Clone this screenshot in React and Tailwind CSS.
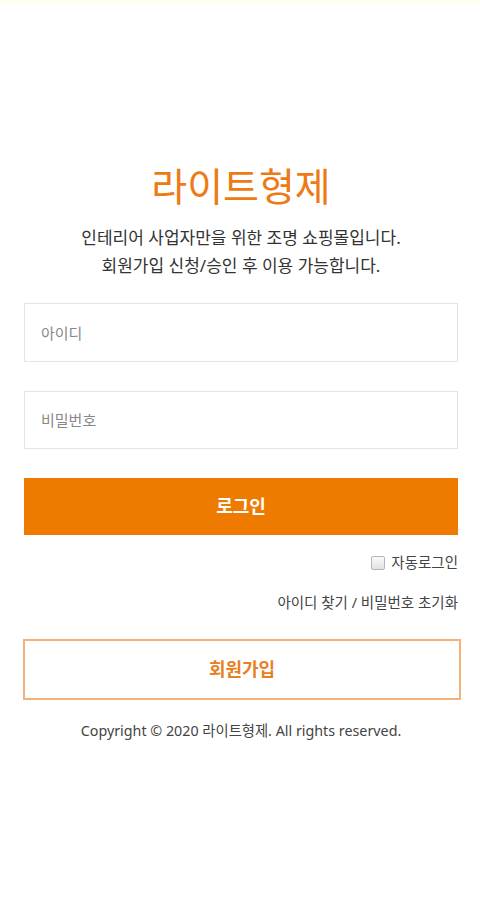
export default function App() {
  return (
    <div
      className="min-h-[900px] w-[480px] bg-white flex flex-col"
      style={{ fontFamily: '"Noto Sans", "Noto Sans CJK KR", sans-serif' }}
    >
      {/* top strip */}
      <div className="h-[4px] bg-[#fffff2]" />

      <div className="pl-6 pr-[22px] pt-[154px]">
        {/* TITLE */}
        <h1 className="text-center text-[39px] leading-[56px] text-[#ee7a16]">
          라이트형제
        </h1>
        <div className="mt-[10px] text-center text-[17px] leading-[28px] text-[#333]">
          <p>인테리어 사업자만을 위한 조명 쇼핑몰입니다.</p>
          <p>회원가입 신청/승인 후 이용 가능합니다.</p>
        </div>

        {/* INPUTS */}
        <div className="mt-[23px] flex flex-col gap-[29px]">
          <input
            placeholder="아이디"
            className="h-[59px] w-full border border-[#e4e4e4] px-4 text-[15px] text-[#333] placeholder:text-[#888] outline-none"
          />
          <input
            type="password"
            placeholder="비밀번호"
            className="h-[58px] w-full border border-[#e4e4e4] px-4 text-[15px] text-[#333] placeholder:text-[#888] outline-none"
          />
        </div>

        {/* LOGIN */}
        <button className="mt-[29px] h-[57px] w-full bg-[#ef7a00] text-[18px] font-bold text-white">
          로그인
        </button>

        <label className="mt-[17px] flex items-center justify-end gap-[6px] text-[14.5px] text-[#444]">
          <span className="h-[14px] w-[14px] rounded-[2px] border border-[#b5b5b5] bg-gradient-to-b from-[#fafafa] to-[#e2e2e2]" />
          자동로그인
        </label>

        <div className="mt-[18px] text-right text-[14.5px] text-[#444]">
          아이디 찾기 / 비밀번호 초기화
        </div>

        {/* SIGN UP */}
        <button className="-ml-px mt-[25px] h-[61px] w-[438px] border-2 border-[#f2b27a] text-[18px] font-bold text-[#e7801e]">
          회원가입
        </button>

        <p className="mt-[20px] text-center text-[14.3px] text-[#444]">
          Copyright © 2020 라이트형제. All rights reserved.
        </p>
      </div>
    </div>
  )
}
